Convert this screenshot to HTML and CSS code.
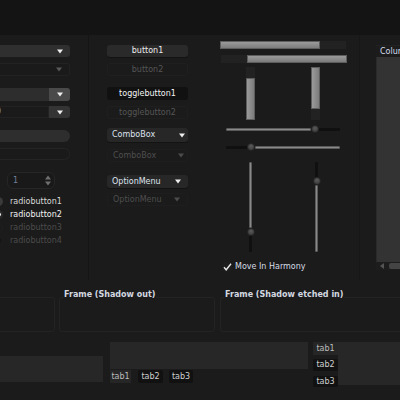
FILE: index.html
```html
<!DOCTYPE html>
<html>
<head>
<meta charset="utf-8">
<link rel="stylesheet" href="styles.css">
</head>
<body>
<div class="top"></div>
<div class="main">
  <div class="col col1">
    <div class="combo c1"><svg class="arr" width="6" height="5" viewBox="0 0 6 5"><path d="M0 .5H6L3 4.5Z"/></svg></div>
    <div class="combo c2"><svg class="arr" width="6" height="5" viewBox="0 0 6 5"><path d="M0 .5H6L3 4.5Z"/></svg></div>
    <div class="centry ce1"><div class="ce-entry"></div><div class="ce-btn"><svg class="arr" width="6" height="5" viewBox="0 0 6 5"><path d="M0 .5H6L3 4.5Z"/></svg></div></div>
    <div class="centry ce2"><div class="ce-entry"><span class="cut">0</span></div><div class="ce-btn"><svg class="arr" width="6" height="5" viewBox="0 0 6 5"><path d="M0 .5H6L3 4.5Z"/></svg></div></div>
    <div class="entry e1"></div>
    <div class="entry e2"></div>
    <div class="spin"><span class="spin-val">1</span><svg class="spin-arr" width="6" height="11" viewBox="0 0 6 11"><path d="M0 4.5L3 .5L6 4.5Z M0 6.5H6L3 10.5Z"/></svg></div>
    <div class="radios">
      <div class="radio"><span class="dot r-off"></span><span class="rl">radiobutton1</span></div>
      <div class="radio"><span class="dot r-on"><i></i></span><span class="rl on">radiobutton2</span></div>
      <div class="radio dim"><span class="dot r-dim"></span><span class="rl">radiobutton3</span></div>
      <div class="radio dim"><span class="dot r-dim2"></span><span class="rl">radiobutton4</span></div>
    </div>
  </div>
  <div class="col col2">
    <div class="btn b1">button1</div>
    <div class="btn b2 ins">button2</div>
    <div class="btn b3 pressed">togglebutton1</div>
    <div class="btn b4 ins">togglebutton2</div>
    <div class="cbox cb1"><span>ComboBox</span><svg class="arr" width="6" height="5" viewBox="0 0 6 5"><path d="M0 .5H6L3 4.5Z"/></svg></div>
    <div class="cbox cb2 ins"><span>ComboBox</span><svg class="arr" width="6" height="5" viewBox="0 0 6 5"><path d="M0 .5H6L3 4.5Z"/></svg></div>
    <div class="cbox om om1"><span>OptionMenu</span><svg class="arr" width="6" height="5" viewBox="0 0 6 5"><path d="M0 .5H6L3 4.5Z"/></svg></div>
    <div class="cbox om om2 ins"><span>OptionMenu</span><svg class="arr" width="6" height="5" viewBox="0 0 6 5"><path d="M0 .5H6L3 4.5Z"/></svg></div>
  </div>
  <div class="col col3">
    <div class="pb pb1"><div class="fill" style="width:100px"></div><div class="trough grow"></div></div>
    <div class="pb pb2"><div class="trough" style="width:26px"></div><div class="fill grow"></div></div>
    <div class="vpbs">
      <div class="vpb"><div class="trough" style="height:11px"></div><div class="fill grow"></div></div>
      <div class="vpb"><div class="fill" style="height:42px"></div><div class="trough grow"></div></div>
    </div>
    <div class="hscale hs1"><div class="sfill" style="width:85px"></div><div class="knob"></div><div class="strough grow"></div></div>
    <div class="hscale hs2"><div class="strough" style="width:21px"></div><div class="knob"></div><div class="sfill grow"></div></div>
    <div class="vscales">
      <div class="vscale"><div class="sfill" style="height:66px"></div><div class="knob"></div><div class="strough grow"></div></div>
      <div class="vscale"><div class="strough" style="height:15px"></div><div class="knob"></div><div class="sfill grow"></div></div>
    </div>
    <div class="check"><span class="cbx"><svg width="9" height="8" viewBox="0 0 9 8"><path d="M1 4.2L3.2 6.8L8 .8" fill="none" stroke="#e4e4e4" stroke-width="1.4"/></svg></span><span class="cl">Move In Harmony</span></div>
  </div>
  <div class="col col4">
    <div class="tree">
      <div class="th">Column 1</div>
      <div class="tb"></div>
      <div class="tsb"><svg width="5" height="6" viewBox="0 0 5 6"><path d="M4 0V6L0 3Z"/></svg><div class="thumb"></div></div>
    </div>
  </div>
</div>
<div class="frames">
  <div class="frame f1"></div>
  <div class="frame f2"><div class="flabel">Frame (Shadow out)</div></div>
  <div class="frame f3"><div class="flabel">Frame (Shadow etched in)</div></div>
</div>
<div class="notebooks">
  <div class="nb nb1"><div class="panel"></div></div>
  <div class="nb nb2">
    <div class="panel"></div>
    <div class="tabs">
      <div class="tab active">tab1</div>
      <div class="tab t2">tab2</div>
      <div class="tab t3">tab3</div>
    </div>
  </div>
  <div class="nb nb3">
    <div class="vtabs">
      <div class="tab active">tab1</div>
      <div class="tab v2">tab2</div>
      <div class="tab v3">tab3</div>
    </div>
    <div class="panel"></div>
  </div>
</div>
</body>
</html>
```

FILE: styles.css
```css
* { box-sizing: border-box; }
html, body { margin: 0; padding: 0; }
body {
  width: 400px;
  height: 400px;
  overflow: hidden;
  background: #1b1b1b;
  font-family: "DejaVu Sans", "Liberation Sans", sans-serif;
  font-size: 8px;
  line-height: 10px;
  color: #e2e2e2;
}
.top { height: 35px; background: #141414; }
.main { display: flex; height: 245px; }
.col { flex: none; }
.col1 { width: 89px; border-right: 1px solid #151515; padding-top: 10px; }
.col2 { width: 121px; padding: 10px 0 0 18px; }
.col3 { width: 150px; border-right: 1px solid #171717; padding-top: 6px; }
.col4 { flex: 1; padding: 10px 0 0 16px; }

.grow { flex: 1 1 auto; }
.arr { display: block; fill: #eeeeee; flex: none; }

/* left column */
.combo { width: 70px; display: flex; align-items: center; justify-content: flex-end; padding-right: 7px; border-radius: 0 3px 3px 0; }
.c1 { height: 12px; background: #2f2f2f; }
.c2 { height: 13px; margin-top: 6px; border: 1px solid #222; border-left: none; background: #1a1a1a; }
.c2 .arr { fill: #595959; }
.centry { display: flex; width: 70px; }
.ce1 { height: 13px; margin-top: 12px; }
.ce2 { height: 12px; margin-top: 5px; }
.ce-entry { width: 49px; }
.ce1 .ce-entry { background: #2d2d2d; }
.ce2 .ce-entry { background: #1a1a1a; border: 1px solid #222; border-left: none; display: flex; align-items: center; overflow: hidden; }
.cut { margin-left: -4px; color: #7f95b8; }
.ce-btn { flex: 1; display: flex; align-items: center; justify-content: center; border-radius: 0 3px 3px 0; padding-left: 1px; }
.ce1 .ce-btn { background: #4a4a4a; }
.ce2 .ce-btn { background: #343434; }
.entry { width: 70px; height: 12px; border-radius: 0 6px 6px 0; }
.e1 { margin-top: 12px; background: #2e2e2e; }
.e2 { margin-top: 6px; border: 1px solid #242424; border-left: none; background: #1a1a1a; }
.spin { margin: 12px 0 0 7px; width: 48px; height: 17px; border: 1px solid #262626; border-radius: 6px; background: #191919; display: flex; align-items: center; justify-content: space-between; padding: 0 3px 0 5px; }
.spin-val { color: #74809a; }
.spin-arr { fill: #6f6f6f; display: block; }
.radios { margin-top: 6px; }
.radio { height: 13px; display: flex; align-items: center; }
.dot { width: 9px; height: 9px; border-radius: 50%; margin-left: -6px; display: flex; align-items: center; justify-content: center; flex: none; }
.r-off { background: #3a3a3a; }
.r-on { background: #2a2a2a; }
.r-on i { width: 3px; height: 3px; border-radius: 50%; background: #f4f4f4; margin-left: 1px; }
.r-dim { border: 1px solid #1f1f1f; }
.r-dim2 { background: #161616; border: 1px solid #202020; }
.rl { margin-left: 7px; color: #d8d8d8; }
.rl.on { color: #f2f2f2; }
.radio.dim .rl { color: #4b4b4b; }

/* middle column */
.btn { width: 81px; display: flex; align-items: center; justify-content: center; border-radius: 3px; }
.b1 { height: 12px; background: #2a2a2a; box-shadow: 0 1px 0 #131313; color: #ececec; }
.b2 { height: 13px; margin-top: 6px; border: 1px solid #1f1f1f; }
.b3 { height: 13px; margin-top: 11px; }
.b4 { height: 13px; margin-top: 6px; border: 1px solid #1f1f1f; }
.pressed { background: #111111; color: #f4f4f4; }
.ins { color: #555555; }
.cbox { width: 81px; display: flex; align-items: center; justify-content: space-between; border-radius: 3px; padding: 0 3px 0 5px; }
.cbox span { color: #dfe3ee; }
.cb1 { height: 14px; margin-top: 9px; background: #272727; box-shadow: 0 1px 0 #131313; }
.cb2 { height: 13px; margin-top: 7px; border: 1px solid #1e1e1e; }
.om { padding-right: 7px; }
.om1 { height: 13px; margin-top: 13px; background: #272727; box-shadow: 0 1px 0 #131313; }
.om2 { height: 13px; margin-top: 5px; border: 1px solid #1e1e1e; }
.ins span { color: #4e4e4e; }
.ins .arr { fill: #4c4c4c; }

/* progress & scales */
.pb { display: flex; width: 126px; height: 8px; }
.pb > div { flex: none; }
.pb > .grow { flex: 1 1 auto; }
.pb1 { margin-left: 10px; }
.pb2 { margin: 6px 0 0 11px; }
.fill { background: linear-gradient(#9a9a9a, #7c7c7c); border: 1px solid #5d5d5d; }
.trough { background: #222222; }
.vpbs { display: flex; gap: 56px; padding-left: 36px; margin-top: 4px; }
.vpb { width: 9px; height: 53px; display: flex; flex-direction: column; }
.vpb > div { flex: none; }
.vpb > .grow { flex: 1 1 auto; }
.vpb .fill { background: linear-gradient(90deg, #9a9a9a, #7c7c7c); }
.hscale { width: 114px; height: 8px; margin-left: 16px; display: flex; align-items: center; }
.hscale > div { flex: none; }
.hscale > .grow { flex: 1 1 auto; }
.hs1 { margin-top: 5px; }
.hs2 { margin-top: 10px; }
.sfill { height: 3px; background: #8a8a8a; border: 1px solid #5a5a5a; border-radius: 1px; }
.strough { height: 3px; background: #101010; }
.knob { width: 8px; height: 8px; border-radius: 50%; background: radial-gradient(circle at 50% 35%, #5a5a5a, #343434); border: 1px solid #262626; }
.vscales { display: flex; gap: 57px; padding-left: 36px; margin-top: 11px; }
.vscale { width: 9px; height: 90px; display: flex; flex-direction: column; align-items: center; }
.vscale > div { flex: none; }
.vscale > .grow { flex: 1 1 auto; }
.vscale .sfill, .vscale .strough { width: 3px; }
.check { display: flex; align-items: center; margin: 9px 0 0 12px; height: 11px; }
.cbx { width: 10px; height: 10px; background: #1d1d1d; border-radius: 2px; display: flex; align-items: center; justify-content: center; }
.cbx svg { display: block; }
.cl { margin-left: 3px; color: #d6dbe6; }

/* tree */
.tree { width: 60px; }
.th { height: 12px; background: #1c1c1c; color: #d5deec; padding-left: 4px; display: flex; align-items: center; white-space: nowrap; overflow: hidden; border-top: 1px solid #222; }
.tb { height: 205px; background: #333333; border-left: 1px solid #2a2a2a; }
.tsb { height: 8px; background: #1d1d1d; display: flex; align-items: center; padding-left: 4px; }
.tsb svg { fill: #555; display: block; }
.thumb { margin-left: 4px; width: 40px; height: 6px; background: #444; border-radius: 2px; }

/* frames */
.frames { height: 60px; display: flex; align-items: flex-start; padding-top: 17px; }
.frame { height: 35px; border: 1px solid #232323; border-radius: 3px; flex: none; }
.f1 { width: 55px; border-left: none; border-radius: 0 3px 3px 0; }
.f2 { width: 156px; margin-left: 4px; }
.f3 { width: 200px; margin-left: 5px; }
.flabel { display: block; width: max-content; margin: -8px 0 0 3px; padding: 0 1px; font-weight: bold; color: #d4d8e0; background: #1b1b1b; line-height: 10px; }

/* notebooks */
.notebooks { height: 60px; display: flex; align-items: flex-start; }
.nb { flex: none; }
.panel { background: #272727; }
.nb1 { width: 103px; margin-top: 16px; }
.nb1 .panel { height: 26px; }
.nb2 { width: 198px; margin: 2px 0 0 7px; }
.nb2 .panel { height: 27px; }
.tabs { display: flex; margin-top: 1px; }
.tab { height: 13px; display: flex; align-items: center; justify-content: center; color: #d0d0d0; background: #111111; border-radius: 2px; }
.tab.active { background: #262626; color: #bcbcbc; border-radius: 0; }
.tabs .active { width: 21px; }
.t2 { width: 25px; margin-left: 7px; }
.t3 { width: 24px; margin-left: 6px; }
.nb3 { display: flex; margin: 2px 0 0 5px; width: 100px; }
.vtabs { width: 25px; }
.v2 { margin-top: 4px; height: 12px; }
.v3 { margin-top: 5px; height: 11px; }
.nb3 .panel { flex: 1; height: 43px; }
```
